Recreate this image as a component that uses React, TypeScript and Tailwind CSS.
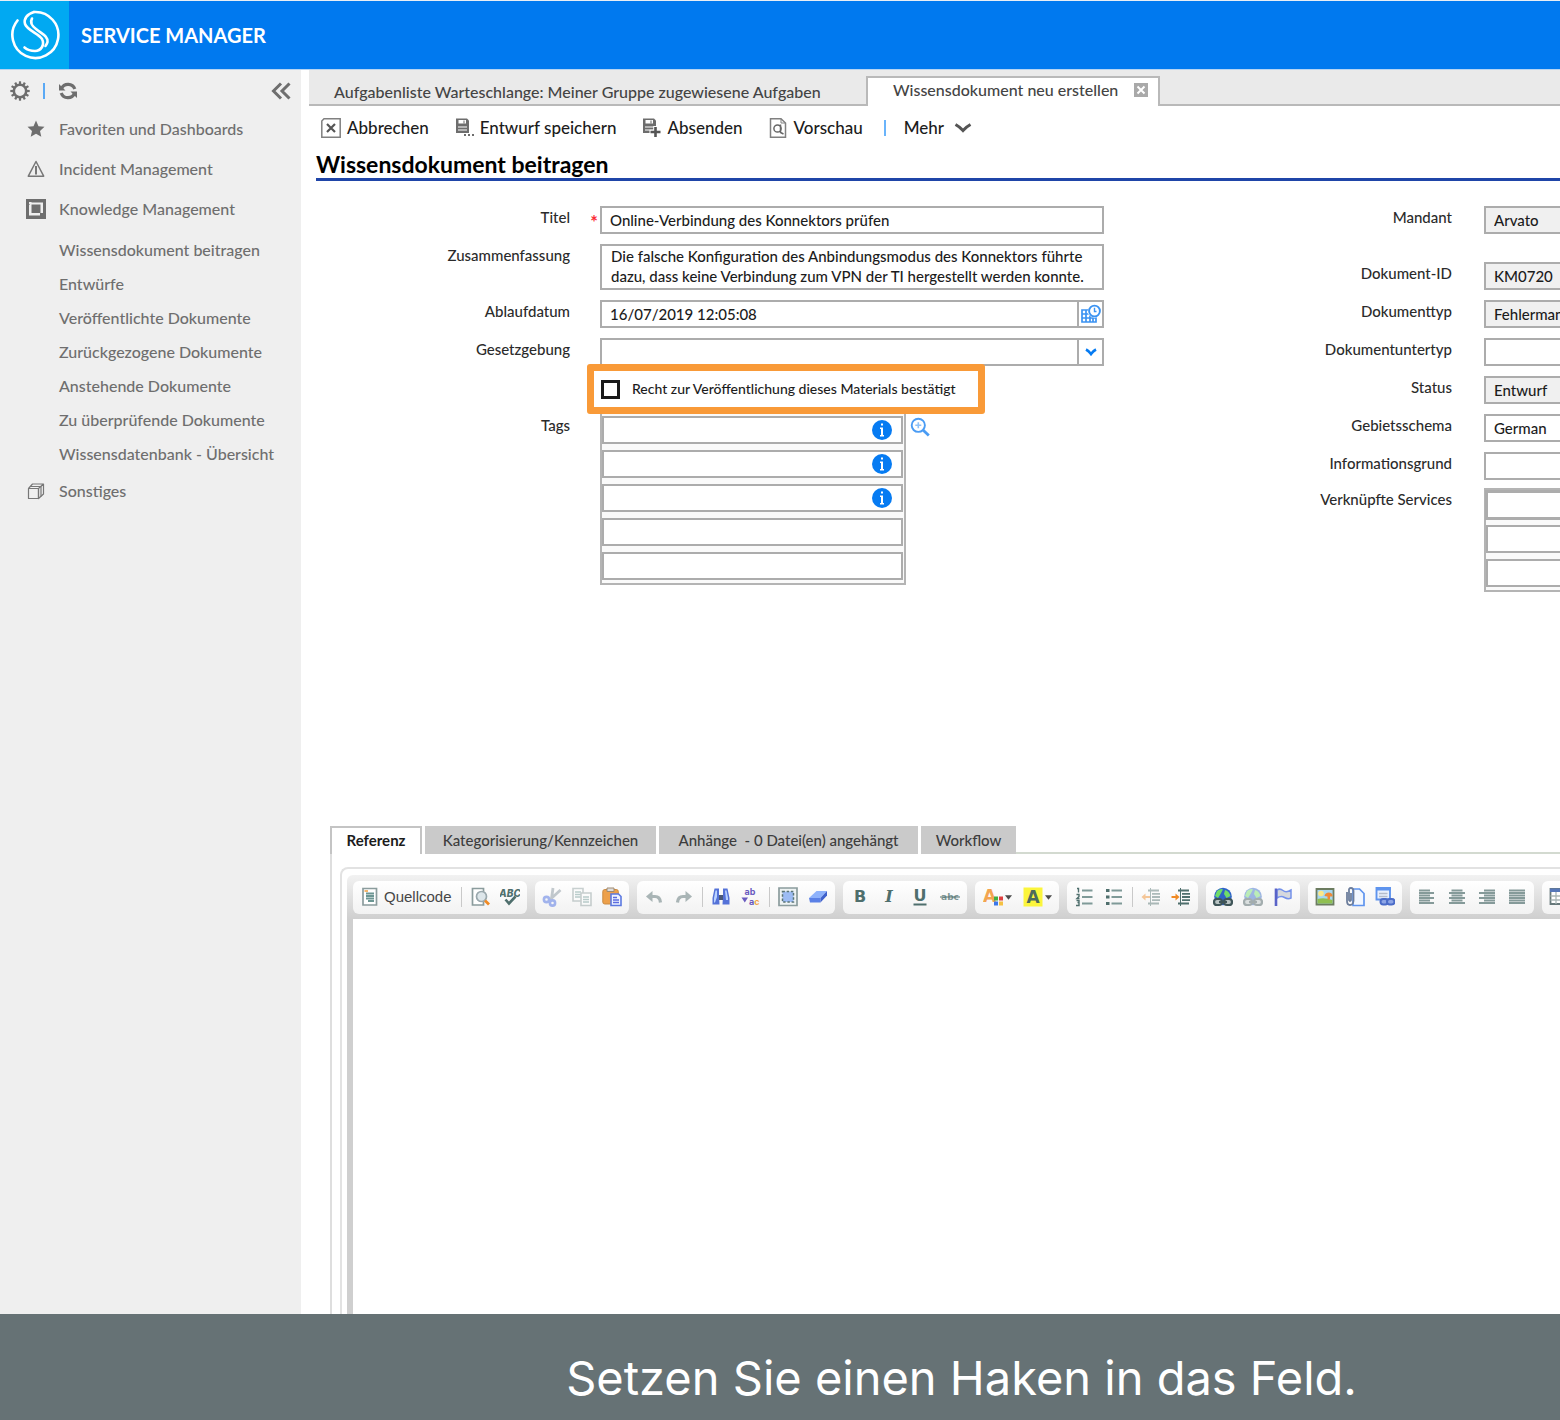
import type { ReactNode } from "react";

const SLATE = "#4f6f6d";

function Svg({ children, size = "size-5", dim = false }: { children: ReactNode; size?: string; dim?: boolean }) {
  return (
    <svg viewBox="0 0 20 20" fill="none" aria-hidden="true" className={`${size} shrink-0 ${dim ? "opacity-45" : ""}`}>
      {children}
    </svg>
  );
}

/* ---------- Header ---------- */

function Header() {
  return (
    <header className="flex h-[70px] items-center border-t border-b border-t-[#e8eef5] border-b-[#b5d4f3] bg-[#0079ef]">
      <div className="flex h-full w-[69px] items-center justify-center bg-[#01a9f2]">
        <svg viewBox="0 0 50 50" className="size-[50px]" fill="none" stroke="#fff" strokeLinecap="round" aria-hidden="true">
          <path d="M7.500 10.500A23 23 0 1 0 24 2" strokeWidth="2.600" />
          <path d="M24 2C17 4 13.500 9 15 14C17 20 29 24 32 29C35 35 31 41 25 41C21 41 17.500 40 14.500 37.500" strokeWidth="2.600" />
          <path d="M22 8.500C19.500 13 22 16 26 19C32 24 38 26 37.500 32C37 34 36 35 35.500 36" strokeWidth="2.600" />
        </svg>
      </div>
      <h1 className="pl-3 text-xl leading-6 font-bold text-white">SERVICE MANAGER</h1>
    </header>
  );
}

/* ---------- Sidebar ---------- */

const gearTeeth = Array.from({ length: 12 }, (_, i) => i * 30);

function GearIcon() {
  return (
    <Svg>
      <circle cx="10" cy="10" r="6.200" stroke="#6e6e6e" strokeWidth="2.600" />
      {gearTeeth.map((a) => (
        <path key={a} d="M10 0.300V3.500" stroke="#6e6e6e" strokeWidth="2.200" transform={`rotate(${a} 10 10)`} />
      ))}
    </Svg>
  );
}

function RefreshIcon() {
  return (
    <Svg>
      <path d="M3.500 7.500A7.200 7.200 0 0 1 16.800 8M16.500 12.500A7.200 7.200 0 0 1 3.200 12" stroke="#6e6e6e" strokeWidth="3.200" />
      <path d="M1 3V9.500H7.500ZM19 17V10.500H12.500Z" fill="#6e6e6e" />
    </Svg>
  );
}

function StarIcon() {
  return (
    <Svg>
      <path d="M10 1.500L12.500 7.200L18.500 7.800L14 11.900L15.300 17.800L10 14.700L4.700 17.800L6 11.900L1.500 7.800L7.500 7.200Z" fill="#6e6e6e" />
    </Svg>
  );
}

function WarnIcon() {
  return (
    <Svg>
      <path d="M10 2.500L17.700 17.200H2.300Z" stroke="#777" strokeWidth="1.500" strokeLinejoin="round" />
      <path d="M10 7V15.500" stroke="#777" strokeWidth="2" />
    </Svg>
  );
}

function KnowledgeIcon() {
  return (
    <Svg>
      <path d="M0 0H20V20H0Z" fill="#6e6e6e" />
      <path d="M4 3.500H17V14H14V16.500H3V6H4Z" fill="#efefef" />
      <path d="M3 3H5.500V4.500H4.500V5.500H3Z" fill="#efefef" />
      <path d="M5.500 5.500H14.500V14H5.500Z" fill="#6e6e6e" />
    </Svg>
  );
}

function StackIcon() {
  return (
    <Svg>
      <g stroke="#777" strokeWidth="1.200" strokeLinejoin="round">
        <path d="M2.500 7.500H12.500V17.500H2.500Z" />
        <path d="M2.500 7.500L6.500 3H17.500V13L12.500 17.500V7.500L17.500 3" />
        <path d="M4.500 5.500H15V15.500" />
      </g>
    </Svg>
  );
}

const knowledgeLinks = [
  "Wissensdokument beitragen",
  "Entwürfe",
  "Veröffentlichte Dokumente",
  "Zurückgezogene Dokumente",
  "Anstehende Dokumente",
  "Zu überprüfende Dokumente",
  "Wissensdatenbank - Übersicht",
];

function NavSection({ icon, label }: { icon: ReactNode; label: string }) {
  return (
    <a href="#" className="flex h-10 items-center gap-[13px] pl-[26px]">
      {icon}
      {label}
    </a>
  );
}

function Sidebar() {
  return (
    <aside className="w-[301px] shrink-0 bg-[#efefef] text-base font-medium text-[#6e6e6e]">
      <div className="flex h-[39px] items-center px-[10px] pt-[3px]">
        <button type="button" aria-label="Einstellungen"><GearIcon /></button>
        <span className="mx-[13px] h-4 w-[2px] bg-[#5aa9f5]" />
        <button type="button" aria-label="Aktualisieren"><RefreshIcon /></button>
        <button type="button" aria-label="Einklappen" className="ml-auto">
          <Svg>
            <path d="M10 2.500L2.500 10L10 17.500M18.500 2.500L11 10L18.500 17.500" stroke="#6e6e6e" strokeWidth="3" />
          </Svg>
        </button>
      </div>
      <nav>
        <NavSection icon={<StarIcon />} label="Favoriten und Dashboards" />
        <NavSection icon={<WarnIcon />} label="Incident Management" />
        <NavSection icon={<KnowledgeIcon />} label="Knowledge Management" />
        <ul className="pt-1">
          {knowledgeLinks.map((l) => (
            <li key={l}>
              <a href="#" className="flex h-[34px] items-center pl-[59px]">{l}</a>
            </li>
          ))}
        </ul>
        <NavSection icon={<StackIcon />} label="Sonstiges" />
      </nav>
    </aside>
  );
}

/* ---------- Page tabs and actions ---------- */

function PageTabs() {
  return (
    <div className="flex h-9 items-end bg-[#eaeaea] text-base font-medium text-[#444]">
      <button type="button" className="h-full w-[557px] border-b-2 border-[#b9b9b9] pt-[10px] pl-[25px] text-left">
        Aufgabenliste Warteschlange: Meiner Gruppe zugewiesene Aufgaben
      </button>
      <div className="flex h-[30px] w-[294px] items-center border-2 border-b-0 border-[#b9b9b9] bg-white pb-1 pl-[25px]">
        <button type="button">Wissensdokument neu erstellen</button>
        <button type="button" aria-label="Tab schließen" className="ml-4">
          <Svg size="size-[14px]">
            <path d="M0 0H20V20H0Z" fill="#a9a9a9" />
            <path d="M5 5L15 15M15 5L5 15" stroke="#fff" strokeWidth="2.800" />
          </Svg>
        </button>
      </div>
      <div className="h-full flex-1 border-b-2 border-[#b9b9b9]" />
    </div>
  );
}

function DiskIcon({ children }: { children: ReactNode }) {
  return (
    <Svg>
      <path d="M2 0.500H13L15 2.500V15H2Z" fill="#6d6d6d" />
      <path d="M4.500 2H12V5.500H4.500ZM4 8.500H13V9.500H4ZM4 11.500H13V12.500H4Z" fill="#fff" />
      <path d="M9.500 2.500H10.500V5.500H9.500Z" fill="#6d6d6d" />
      {children}
    </Svg>
  );
}

function Action({ icon, label }: { icon: ReactNode; label: string }) {
  return (
    <button type="button" className="flex items-center gap-[6px]">
      {icon}
      {label}
    </button>
  );
}

function ActionBar() {
  return (
    <div className="flex h-11 items-center gap-[25px] pl-3 text-[17px] font-medium text-[#1c1c1c]">
      <Action
        label="Abbrechen"
        icon={
          <Svg>
            <path d="M3 0.800H19.200V19.200H0.800V3Z" stroke="#808080" strokeWidth="1.500" />
            <path d="M6 6L14 14M14 6L6 14" stroke="#555" strokeWidth="2.200" />
          </Svg>
        }
      />
      <Action
        label="Entwurf speichern"
        icon={
          <DiskIcon>
            <path d="M9 15H20V20H9Z" fill="#fff" />
            <path d="M10 16H12V18H10ZM14 16H16V18H14ZM18 16H20V18H18Z" fill="#6d6d6d" />
          </DiskIcon>
        }
      />
      <Action
        label="Absenden"
        icon={
          <DiskIcon>
            <path d="M14.500 8V20M8.500 14H20" stroke="#fff" strokeWidth="4.500" />
            <path d="M14.500 9V19M9.500 14H19.500" stroke="#555" strokeWidth="2.600" />
          </DiskIcon>
        }
      />
      <Action
        label="Vorschau"
        icon={
          <Svg>
            <path d="M2.500 0.800H13L17.500 5V19.200H2.500Z" stroke="#808080" strokeWidth="1.500" />
            <path d="M13 1V5H17" stroke="#808080" />
            <circle cx="9.500" cy="10.500" r="3.600" stroke="#666" strokeWidth="1.500" />
            <path d="M12.500 6.500V14.500L15.500 16" stroke="#666" strokeWidth="1.500" />
          </Svg>
        }
      />
      <span className="-ml-1 h-4 w-[2px] bg-[#6ab4fb]" />
      <button type="button" className="-ml-[7px] flex items-center gap-[10px]">
        Mehr
        <svg viewBox="0 0 18 12" className="h-3 w-[18px]" fill="none" aria-hidden="true">
          <path d="M1.500 2.500Q6 5 9 8.500Q12 5 16.500 2.500" stroke="#555" strokeWidth="3" />
        </svg>
      </button>
    </div>
  );
}

/* ---------- Form ---------- */

const labelClass = "w-[261px] shrink-0 text-right text-[15px] leading-[22px] font-medium text-[#2b2b2b]";
const boxClass = "border-2 border-[#acacac] text-[15px] font-medium text-[#1c1c1c]";

function CalendarIcon() {
  return (
    <Svg>
      <path d="M1 6H12V18H1ZM1 10H14M1 14H15M5 6V18M9 6V18M12 14V18H15V13" stroke="#3b93f2" strokeWidth="1.700" />
      <circle cx="13.500" cy="7" r="6.800" fill="#fff" />
      <circle cx="13.500" cy="7" r="5.400" stroke="#3b93f2" strokeWidth="1.900" />
      <path d="M13.500 3.800V7.500H15.500" stroke="#3b93f2" strokeWidth="1.400" />
    </Svg>
  );
}

function InfoIcon() {
  return (
    <Svg>
      <circle cx="10" cy="10" r="10" fill="#067bf2" />
      <path d="M9 3.500H11V5.500H9ZM8 7.500H11V15H12V16.500H8V15H9V9H8Z" fill="#fff" />
    </Svg>
  );
}

function LeftColumn() {
  return (
    <div className="w-[795px] shrink-0">
      <div className="flex">
        <label htmlFor="titel" className={labelClass}>Titel</label>
        <span className="w-[30px] pt-[6px] pr-[2px] text-right text-lg leading-5 font-bold text-red-500">*</span>
        <input id="titel" defaultValue="Online-Verbindung des Konnektors prüfen" className={`${boxClass} h-7 flex-1 px-2`} />
      </div>
      <div className="mt-[10px] flex gap-[30px]">
        <label htmlFor="zusammenfassung" className={labelClass}>Zusammenfassung</label>
        <textarea
          id="zusammenfassung"
          wrap="off"
          defaultValue={"Die falsche Konfiguration des Anbindungsmodus des Konnektors führte\ndazu, dass keine Verbindung zum VPN der TI hergestellt werden konnte."}
          className={`${boxClass} h-[46px] flex-1 resize-none overflow-hidden pl-[9px] leading-5`}
        />
      </div>
      <div className="mt-[10px] flex gap-[30px]">
        <label htmlFor="ablauf" className={labelClass}>Ablaufdatum</label>
        <div className={`${boxClass} flex h-7 flex-1`}>
          <input id="ablauf" defaultValue="16/07/2019 12:05:08" className="min-w-0 flex-1 px-2" />
          <button type="button" aria-label="Kalender öffnen" className="flex w-[25px] items-center justify-center border-l-2 border-[#acacac]">
            <CalendarIcon />
          </button>
        </div>
      </div>
      <div className="mt-[10px] flex gap-[30px]">
        <label htmlFor="gesetz" className={labelClass}>Gesetzgebung</label>
        <div className={`${boxClass} flex h-7 flex-1`}>
          <input id="gesetz" className="min-w-0 flex-1 px-2" />
          <button type="button" aria-label="Liste öffnen" className="flex w-[25px] items-center justify-center border-l-2 border-[#acacac]">
            <svg viewBox="0 0 12 8" className="h-2 w-3" fill="none" aria-hidden="true">
              <path d="M1 1.500Q4 3 6 6Q8 3 11 1.500" stroke="#067bf2" strokeWidth="2.600" />
            </svg>
          </button>
        </div>
      </div>
      <label className="relative -mt-[2px] ml-[278px] flex h-[50px] w-[398px] items-center rounded-[3px] border-[7px] border-[#f99a38] bg-white pl-[7px] text-sm font-medium text-[#1c1c1c]">
        <input type="checkbox" className="mr-3 size-[19px] appearance-none border-[3px] border-[#1a1a1a] bg-white checked:bg-[#1a1a1a]" />
        Recht zur Veröffentlichung dieses Materials bestätigt
      </label>
      <div className="flex">
        <span id="tags" className={labelClass}>Tags</span>
        <div role="group" aria-labelledby="tags" className="ml-[30px] flex w-[306px] flex-col gap-[6px] border-2 border-t-0 border-[#b4b4b4] bg-[#fafafa] pt-[2px] pr-px pb-[3px]">
          {[true, true, true, false, false].map((info, i) => (
            <div key={i} className="flex h-7 items-center border-2 border-[#acacac] bg-white">
              <input aria-label={`Tag ${i + 1}`} className="min-w-0 flex-1 px-2 text-[15px]" />
              {info && (
                <button type="button" aria-label="Information" className="mr-[9px]">
                  <InfoIcon />
                </button>
              )}
            </div>
          ))}
        </div>
        <button type="button" aria-label="Suchen" className="mt-[3px] ml-1 self-start">
          <Svg>
            <circle cx="8.300" cy="8.300" r="6.600" stroke="#4a9cf4" strokeWidth="1.900" />
            <path d="M13 13L18.800 18.500" stroke="#4a9cf4" strokeWidth="2.800" />
            <path d="M8.300 5.300V11.300M5.300 8.300H11.300" stroke="#8fc2f8" strokeWidth="1.600" />
          </Svg>
        </button>
      </div>
    </div>
  );
}

const rightFields = [
  { id: "dokid", label: "Dokument-ID", value: "KM0720", locked: true },
  { id: "doktyp", label: "Dokumenttyp", value: "Fehlermanagement", locked: true },
  { id: "dokuntertyp", label: "Dokumentuntertyp", value: "", locked: false },
  { id: "status", label: "Status", value: "Entwurf", locked: true },
  { id: "gebiet", label: "Gebietsschema", value: "German", locked: false },
  { id: "infogrund", label: "Informationsgrund", value: "", locked: false },
];

function RightField({ id, label, value, locked }: (typeof rightFields)[number]) {
  return (
    <div className="flex gap-8">
      <label htmlFor={id} className={labelClass}>{label}</label>
      <input
        id={id}
        defaultValue={value}
        readOnly={locked}
        className={`${boxClass} h-7 min-w-[504px] flex-1 px-2 ${locked ? "bg-[#f0f0f0]" : "bg-white"}`}
      />
    </div>
  );
}

function RightColumn() {
  return (
    <div className="min-w-0 flex-1 overflow-hidden pl-[87px]">
      <RightField id="mandant" label="Mandant" value="Arvato" locked />
      <div className="mt-7 flex flex-col gap-[10px]">
        {rightFields.map((f) => (
          <RightField key={f.id} {...f} />
        ))}
      </div>
      <div className="mt-2 flex gap-8">
        <span id="services" className={labelClass}>Verknüpfte Services</span>
        <div role="group" aria-labelledby="services" className="flex min-w-[504px] flex-1 flex-col gap-[6px] border-2 border-[#b4b4b4] bg-[#fafafa] pt-px pb-[3px]">
          {[0, 1, 2].map((i) => (
            <input key={i} aria-label={`Service ${i + 1}`} className="h-7 border-2 border-[#acacac] bg-white px-2 text-[15px] first:outline-1 first:outline-[#acacac]" />
          ))}
        </div>
      </div>
    </div>
  );
}

/* ---------- Editor icons ---------- */

const lines = (d: string, color: string, width = 1.6) => <path d={d} stroke={color} strokeWidth={width} />;

function SourceIcon() {
  return (
    <Svg>
      <path d="M3 1.500H16.500V18H3Z" fill="#fff" stroke="#8b9c9d" strokeWidth="1.700" />
      {lines("M6 6.500H14M6 9H14M6 11.500H14M8 14H14", "#6c9693", 1.900)}
      <path d="M4.500 3H8V5H4.500Z" fill="#f5b56b" />
    </Svg>
  );
}

function PreviewIcon() {
  return (
    <Svg>
      <path d="M2.500 1.500H13.500V18H2.500Z" fill="#fff" stroke="#8b9c9d" strokeWidth="1.700" />
      <circle cx="11.500" cy="9.500" r="5" fill="#dde6ea" stroke="#9aa8ad" strokeWidth="1.700" />
      <path d="M15 13.500L19 17.500" stroke="#f08a24" strokeWidth="2.800" />
    </Svg>
  );
}

function SpellIcon() {
  return (
    <Svg>
      <text x="10" y="9.500" textAnchor="middle" fontFamily="Inter" fontSize="10" fontWeight="800" fontStyle="italic" fill={SLATE}>ABC</text>
      <path d="M5.500 12.500L9 16.500L15.500 9.500" stroke={SLATE} strokeWidth="2.600" />
    </Svg>
  );
}

function CutIcon() {
  return (
    <Svg dim>
      <path d="M11 1L9.500 12M18.500 3L7 13.500" stroke="#7d8c96" strokeWidth="2.800" />
      <circle cx="4.500" cy="12.500" r="2.600" stroke="#3b62e0" strokeWidth="2.600" />
      <circle cx="10.500" cy="16" r="2.600" stroke="#3b62e0" strokeWidth="2.600" />
    </Svg>
  );
}

function CopyIcon() {
  return (
    <Svg dim>
      <path d="M1 1.500H11V14H1Z" fill="#fff" stroke="#8b9b9b" strokeWidth="1.600" />
      {lines("M3 5H9M3 7.500H9M3 10H9", "#6c9693", 1.500)}
      <path d="M9 6H19V18.500H9Z" fill="#fff" stroke="#8b9b9b" strokeWidth="1.600" />
      {lines("M11 10H17M11 12.500H17M11 15H17", "#6c9693", 1.500)}
    </Svg>
  );
}

function PasteIcon() {
  return (
    <Svg>
      <rect x="0.800" y="2.500" width="15.500" height="14.500" rx="2" fill="#eda04a" stroke="#c98a42" />
      <path d="M5 1H12V4.500H5Z" fill="#dcdcdc" stroke="#a08a70" />
      <path d="M9 7H16.500L19 9.500V18.500H9Z" fill="#eef3ff" stroke="#5b78e0" strokeWidth="1.600" />
      {lines("M11 10.500H15M11 13H17M11 15.500H17", "#5b6ce0", 1.500)}
    </Svg>
  );
}

function UndoIcon({ redo = false }: { redo?: boolean }) {
  return (
    <Svg dim>
      <g transform={redo ? "translate(20 0) scale(-1 1)" : undefined}>
        <path d="M6 9.500H11Q16 9.500 16.500 15.500" stroke="#4a6466" strokeWidth="3.200" />
        <path d="M8.500 4V15L2 9.500Z" fill="#4a6466" />
      </g>
    </Svg>
  );
}

function FindIcon() {
  return (
    <Svg>
      <path d="M3.500 1.500H8V8L8.500 17.500H1.500V11ZM16.500 1.500H12V8L11.500 17.500H18.500V11Z" fill="#5472d8" />
      <path d="M8 8H12V13H8Z" fill="#4a5878" />
      <path d="M4.500 3.500H6V10L4 15.500H3V11ZM14 3.500H15.500L17 11V13H15Z" fill="#b9d2ff" />
    </Svg>
  );
}

function ReplaceIcon() {
  return (
    <Svg>
      <g fontFamily="Inter" fontWeight="700" fontSize="9" fill="#6a5cc0">
        <text x="3.500" y="7.500">ab</text>
        <text x="8" y="18">a<tspan fill="#f2a64a">c</tspan></text>
      </g>
      <path d="M0.500 10.500H7L3.800 15.500Z" fill="#6a5cc0" />
    </Svg>
  );
}

function SelectAllIcon() {
  return (
    <Svg>
      <path d="M1 1H19V18.500H1Z" fill="#eef3f3" stroke="#8b9c9d" strokeWidth="1.700" />
      <path d="M4.500 4.500H15.500V15H4.500Z" fill="#9dbcf4" stroke="#5a7476" strokeWidth="1.500" strokeDasharray="2.400 1.800" />
    </Svg>
  );
}

function EraserIcon() {
  return (
    <Svg>
      <path d="M1 11L8.500 4H19L12.500 11Z" fill="#8eb2fb" />
      <path d="M1 11H12.500V15.500H2Z" fill="#5a80e6" />
      <path d="M12.500 11L19 4V8.500L12.500 15.500Z" fill="#3f61cc" />
    </Svg>
  );
}

function LetterIcon({ kind }: { kind: "B" | "I" | "U" | "abc" }) {
  return (
    <Svg>
      {kind === "B" && <text x="10" y="15" textAnchor="middle" fontFamily="DejaVu Sans" fontSize="16" fontWeight="700" fill={SLATE}>B</text>}
      {kind === "I" && <text x="9" y="15" textAnchor="middle" fontFamily="DejaVu Serif" fontSize="16" fontWeight="700" fontStyle="italic" fill={SLATE}>I</text>}
      {kind === "U" && (
        <>
          <text x="10" y="14" textAnchor="middle" fontFamily="DejaVu Sans" fontSize="16" fontWeight="700" fill={SLATE}>U</text>
          <path d="M3.500 17.500H16.500" stroke={SLATE} strokeWidth="2" />
        </>
      )}
      {kind === "abc" && (
        <>
          <text x="10" y="13" textAnchor="middle" fontFamily="DejaVu Sans" fontSize="9" fontWeight="700" fill="#7f9796">abc</text>
          <path d="M0 10H20" stroke={SLATE} strokeWidth="1.200" />
        </>
      )}
    </Svg>
  );
}

function TextColorIcon() {
  return (
    <Svg>
      <text x="6.500" y="14.500" textAnchor="middle" fontFamily="DejaVu Sans" fontSize="17" fontWeight="700" fill="#f3a550">A</text>
      <path d="M11 9.500H15V13.500H11Z" fill="#3fae3f" />
      <path d="M16 9.500H20V13.500H16Z" fill="#e04040" />
      <path d="M11 14.500H15V18.500H11Z" fill="#3b78ea" />
      <path d="M16 14.500H20V18.500H16Z" fill="#f5c142" />
    </Svg>
  );
}

function BgColorIcon() {
  return (
    <Svg>
      <path d="M0.500 0.500H19.500V19.500H0.500Z" fill="#fbf53c" />
      <text x="10" y="16" textAnchor="middle" fontFamily="DejaVu Sans" fontSize="17" fontWeight="700" fill="#4c6a5c">A</text>
    </Svg>
  );
}

function NumberedIcon() {
  return (
    <Svg>
      {lines("M8 3.500H18.500M8 10H18.500M8 16.500H18.500", "#7f9a98", 1.900)}
      <path d="M3 1.500H4.500V5.500M2.500 7.500H5V9.500L3 11.500H5.500M2.500 13.500H5V15.500H3.500M5 15.500V18.500H2" stroke={SLATE} strokeWidth="1.400" />
    </Svg>
  );
}

function BulletIcon() {
  return (
    <Svg>
      {lines("M7.500 3.500H18M7.500 10H18M7.500 16.500H18", "#7f9a98", 1.900)}
      <path d="M2 2H5.500V5H2ZM2 8.500H5.500V11.500H2ZM2 15H5.500V18H2Z" fill={SLATE} />
    </Svg>
  );
}

function IndentIcon({ outdent = false }: { outdent?: boolean }) {
  return (
    <Svg dim={outdent}>
      {lines("M7 3.500H18M11 6.800H19M11 10H19M11 13.200H19M7 16.500H18", SLATE, 1.800)}
      {lines("M9.500 1V19", SLATE, 1)}
      {outdent ? (
        <path d="M9 9V11H4.500V13.500L0.500 10L4.500 6.500V9Z" fill="#f08a24" />
      ) : (
        <path d="M0.500 9V11H4.500V13.500L8.500 10L4.500 6.500V9Z" fill="#f08a24" />
      )}
    </Svg>
  );
}

function GlobeIcon({ dim = false }: { dim?: boolean }) {
  return (
    <Svg dim={dim}>
      <circle cx="10" cy="9.500" r="8.800" fill="#2f64c8" />
      <path d="M4 4Q8 1 10 2.500L7.500 7L5 11L2 9ZM12 3Q16 4 17.500 9L13.500 11L11 7Z" fill="#6fdc68" />
      <rect x="1" y="12" width="8" height="6" rx="3" fill="#b9c4c4" stroke="#3f5558" strokeWidth="2.200" />
      <rect x="11" y="12" width="8" height="6" rx="3" fill="#b9c4c4" stroke="#3f5558" strokeWidth="2.200" />
      <path d="M6 15H14" stroke="#3f5558" strokeWidth="2" />
    </Svg>
  );
}

function FlagIcon() {
  return (
    <Svg>
      <path d="M4 3Q7 1 10 3.500T18 3V11Q15 12.500 11.500 10.500T4 11Z" fill="#d5d8de" stroke="#7592ea" strokeWidth="1.500" />
      <path d="M3 1.500V19" stroke="#5a63c8" strokeWidth="2.600" />
    </Svg>
  );
}

function ImageIcon() {
  return (
    <Svg>
      <path d="M1.500 2H18.500V17.500H1.500Z" fill="#a8d8f0" stroke="#6c7c60" strokeWidth="1.800" />
      <path d="M2.500 12Q9 10 17.500 13V16.500H2.500Z" fill="#8fbf50" />
      <circle cx="6" cy="6.500" r="2.800" fill="#fbe88a" />
      <path d="M9.500 9Q10 5.500 14 5.500Q18 6 17.500 9.500H15V12.500H12.500V9.500Z" fill="#ee8a3a" />
    </Svg>
  );
}

function AttachIcon() {
  return (
    <Svg>
      <path d="M8 2H14.500L19 6.500V18.500H8Z" fill="#f2f7ff" stroke="#5f94ee" strokeWidth="1.700" />
      <path d="M2 5V14Q2 18 5 18T8.500 14V4Q8.500 1 6 1T4 4V13Q5 15 6 13V6" stroke="#6d7e9c" strokeWidth="1.800" />
    </Svg>
  );
}

function DocLinkIcon() {
  return (
    <Svg>
      <path d="M1.500 1H15V12.500H1.500Z" fill="#e9f0fd" stroke="#5f94ee" strokeWidth="1.900" />
      <path d="M1 0.500H15.500V3.500H1Z" fill="#5f94ee" />
      {lines("M4 6.500H12.500M4 9.500H12.500", "#b5bccb", 1.700)}
      <rect x="5.500" y="12" width="7.500" height="5.500" rx="2.700" fill="#8ea6e6" stroke="#4b6cc8" strokeWidth="2" />
      <rect x="12" y="12" width="7.500" height="5.500" rx="2.700" fill="#8ea6e6" stroke="#4b6cc8" strokeWidth="2" />
    </Svg>
  );
}

const alignPaths = {
  left: "M2 3.500H13M2 6H17M2 8.500H13M2 11H17M2 13.500H13M2 16H17",
  center: "M4.500 3.500H15.500M2 6H18M4.500 8.500H15.500M2 11H18M4.500 13.500H15.500M2 16H18",
  right: "M7 3.500H18M2 6H18M7 8.500H18M2 11H18M7 13.500H18M2 16H18",
  justify: "M2 3.500H18M2 6H18M2 8.500H18M2 11H18M2 13.500H18M2 16H18",
};

function AlignIcon({ kind }: { kind: keyof typeof alignPaths }) {
  return <Svg>{lines(alignPaths[kind], "#859a99", 2.100)}</Svg>;
}

function TableIcon() {
  return (
    <Svg>
      <path d="M1.500 2H18.500V17H1.500Z" fill="#fff" stroke="#66787a" strokeWidth="1.800" />
      <path d="M1 1.500H19V5H1Z" fill="#5677b8" />
      <path d="M1.500 9H18.500M1.500 13H18.500M7 5V17M12.500 5V17" stroke="#a9b5b5" strokeWidth="1.300" />
    </Svg>
  );
}

/* ---------- Editor ---------- */

function Tool({ label, children }: { label: string; children: ReactNode }) {
  return (
    <button type="button" aria-label={label} className="flex w-[30px] items-center justify-center">
      {children}
    </button>
  );
}

function ColorTool({ label, children }: { label: string; children: ReactNode }) {
  return (
    <button type="button" aria-label={label} className="flex w-10 items-center justify-center gap-[2px]">
      {children}
      <svg viewBox="0 0 8 5" className="h-[5px] w-[7px]" aria-hidden="true">
        <path d="M0 0H8L4 5Z" fill="#4b4b4b" />
      </svg>
    </button>
  );
}

function Group({ children }: { children: ReactNode }) {
  return (
    <div className="flex h-[33px] shrink-0 items-center rounded-md bg-linear-to-b from-white to-[#f2f2f2] px-[2px]">{children}</div>
  );
}

const Sep = () => <span className="mx-[3px] h-5 w-px bg-[#c9c9c9]" />;

function EditorToolbar() {
  return (
    <div role="toolbar" className="flex h-11 items-center gap-2 overflow-hidden bg-linear-to-b from-[#f2f2f2] to-[#cfcfcf] pl-[6px]">
      <Group>
        <button type="button" className="flex w-[103px] items-center gap-1 pl-[5px] text-[15px] text-[#474747] font-[Liberation_Sans]">
          <SourceIcon />
          Quellcode
        </button>
        <Sep />
        <Tool label="Vorschau"><PreviewIcon /></Tool>
        <Tool label="Rechtschreibprüfung"><SpellIcon /></Tool>
      </Group>
      <Group>
        <Tool label="Ausschneiden"><CutIcon /></Tool>
        <Tool label="Kopieren"><CopyIcon /></Tool>
        <Tool label="Einfügen"><PasteIcon /></Tool>
      </Group>
      <Group>
        <Tool label="Rückgängig"><UndoIcon /></Tool>
        <Tool label="Wiederherstellen"><UndoIcon redo /></Tool>
        <Sep />
        <Tool label="Suchen"><FindIcon /></Tool>
        <Tool label="Ersetzen"><ReplaceIcon /></Tool>
        <Sep />
        <Tool label="Alles auswählen"><SelectAllIcon /></Tool>
        <Tool label="Formatierung entfernen"><EraserIcon /></Tool>
      </Group>
      <Group>
        <Tool label="Fett"><LetterIcon kind="B" /></Tool>
        <Tool label="Kursiv"><LetterIcon kind="I" /></Tool>
        <Tool label="Unterstrichen"><LetterIcon kind="U" /></Tool>
        <Tool label="Durchgestrichen"><LetterIcon kind="abc" /></Tool>
      </Group>
      <Group>
        <ColorTool label="Textfarbe"><TextColorIcon /></ColorTool>
        <ColorTool label="Hintergrundfarbe"><BgColorIcon /></ColorTool>
      </Group>
      <Group>
        <Tool label="Nummerierte Liste"><NumberedIcon /></Tool>
        <Tool label="Liste"><BulletIcon /></Tool>
        <Sep />
        <Tool label="Einzug verkleinern"><IndentIcon outdent /></Tool>
        <Tool label="Einzug vergrößern"><IndentIcon /></Tool>
      </Group>
      <Group>
        <Tool label="Link"><GlobeIcon /></Tool>
        <Tool label="Link entfernen"><GlobeIcon dim /></Tool>
        <Tool label="Anker"><FlagIcon /></Tool>
      </Group>
      <Group>
        <Tool label="Bild"><ImageIcon /></Tool>
        <Tool label="Anhang"><AttachIcon /></Tool>
        <Tool label="Dokumentlink"><DocLinkIcon /></Tool>
      </Group>
      <Group>
        <Tool label="Linksbündig"><AlignIcon kind="left" /></Tool>
        <Tool label="Zentriert"><AlignIcon kind="center" /></Tool>
        <Tool label="Rechtsbündig"><AlignIcon kind="right" /></Tool>
        <Tool label="Blocksatz"><AlignIcon kind="justify" /></Tool>
      </Group>
      <Group>
        <Tool label="Tabelle"><TableIcon /></Tool>
      </Group>
    </div>
  );
}

function Details() {
  return (
    <section className="mt-[234px] ml-[21px] flex flex-1 flex-col">
      <div className="flex h-7 items-stretch gap-[3px] text-[15px] font-medium text-[#3d3d3d]">
        <button type="button" className="w-[92px] border-2 border-b-0 border-[#c4c4c4] pb-[2px] font-bold text-[#1c1c1c]">Referenz</button>
        <button type="button" className="w-[231px] bg-[#cacaca]">Kategorisierung/Kennzeichen</button>
        <button type="button" className="w-[259px] bg-[#cacaca] whitespace-pre">{"Anhänge  - 0 Datei(en) angehängt"}</button>
        <button type="button" className="w-[95px] bg-[#cacaca]">Workflow</button>
        <div className="-ml-[3px] flex-1 border-b-2 border-[#d3dad0]" />
      </div>
      <div className="flex flex-1 flex-col border-l-2 border-[#dedede] pt-[13px] pl-2">
        <div className="flex flex-1 flex-col rounded-tl-lg border-t-2 border-l-2 border-[#e2e2e2] pt-[6px] pl-[5px]">
          <div className="flex flex-1 flex-col overflow-hidden rounded-tl-md">
            <EditorToolbar />
            <textarea aria-label="Referenztext" className="block flex-1 resize-none border-l-[6px] border-[#cfcfcf] p-3 text-[15px]" />
          </div>
        </div>
      </div>
    </section>
  );
}

/* ---------- Page ---------- */

export default function App() {
  return (
    <div className="flex min-h-screen flex-col overflow-x-hidden bg-white font-[Lato,sans-serif]">
      <Header />
      <div className="flex flex-1">
        <Sidebar />
        <main className="flex min-w-0 flex-1 flex-col pl-2">
          <PageTabs />
          <ActionBar />
          <h2 className="ml-[7px] border-b-[3px] border-[#1f45a8] text-[23px] leading-[28px] font-bold text-black">
            Wissensdokument beitragen
          </h2>
          <div className="flex pt-[25px]">
            <LeftColumn />
            <RightColumn />
          </div>
          <Details />
        </main>
      </div>
      <footer className="flex h-[106px] items-center justify-center bg-[#667275] pt-[22px] pl-[363px] text-[47px] text-white font-[Inter,sans-serif]">
        Setzen Sie einen Haken in das Feld.
      </footer>
    </div>
  );
}
